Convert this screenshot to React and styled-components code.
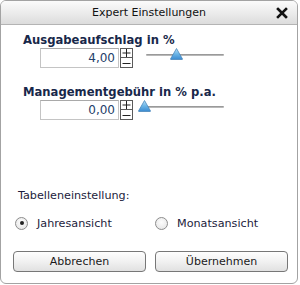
import React from "react";
import styled, { createGlobalStyle } from "styled-components";

const Global = createGlobalStyle`
  html, body { margin: 0; padding: 0; background: #fff; }
  body { font-family: "DejaVu Sans", Verdana, sans-serif; }
`;

const Dialog = styled.div`
  box-sizing: border-box;
  width: 298px;
  height: 284px;
  border: 1px solid #a3a3a3;
  border-radius: 6px;
  overflow: hidden;
  display: flex;
  flex-direction: column;
  background: #fff;
`;

const TitleBar = styled.div`
  box-sizing: border-box;
  height: 24px;
  flex: none;
  display: flex;
  align-items: center;
  justify-content: center;
  position: relative;
  background: linear-gradient(#fbfbfb, #e9e9e9 60%, #dcdcdc);
  border-bottom: 1px solid #b4b4b4;
  font-size: 11px;
  color: #111;
`;

const Close = styled.button`
  position: absolute;
  right: 9px;
  top: 6px;
  width: 12px;
  height: 12px;
  padding: 0;
  border: 0;
  background: none;
  display: flex;
`;

const Body = styled.div`
  flex: 1;
  display: flex;
  flex-direction: column;
  padding: 7px 0 0 0;
`;

const FieldLabel = styled.div`
  font-size: 11.6px;
  font-weight: bold;
  line-height: 16px;
  color: #18284a;
  padding-left: 22px;
  margin-top: ${(p) => p.$top || 0}px;
  white-space: nowrap;
`;

const InputRow = styled.div`
  display: flex;
  align-items: center;
  padding-left: 39px;
  height: 20px;
`;

const NumberBox = styled.div`
  box-sizing: border-box;
  width: 79px;
  height: 20px;
  border: 1px solid #c4c4c4;
  border-top-color: #a9a9a9;
  font-size: 12px;
  color: #24406a;
  display: flex;
  align-items: center;
  justify-content: flex-end;
  padding-right: 3px;
`;

const Spinner = styled.div`
  display: flex;
  flex-direction: column;
  margin-left: 1px;
`;

const SpinBtn = styled.div`
  box-sizing: border-box;
  width: 13px;
  height: 10px;
  border: 1px solid #5a5a5a;
  background: #fff;
  display: flex;
  align-items: center;
  justify-content: center;
  & + & { margin-top: -1px; height: 11px; }
`;

const Slider = styled.div`
  position: relative;
  width: 78px;
  height: 20px;
  margin-left: ${(p) => p.$gap}px;
`;

const Track = styled.div`
  position: absolute;
  left: 0;
  right: 0;
  top: ${(p) => p.$y}px;
  height: 2px;
  border-radius: 1px;
  background: linear-gradient(#8a8a8a, #c8c8c8);
`;

const Thumb = styled.svg`
  position: absolute;
  top: ${(p) => p.$y}px;
  width: 13px;
  height: 12px;
`;

const SectionLabel = styled.div`
  font-size: 11.2px;
  line-height: 15px;
  color: #1c1c3c;
  padding-left: 17px;
  margin-top: ${(p) => p.$top}px;
`;

const RadioRow = styled.div`
  display: flex;
  align-items: center;
  height: 16px;
  margin-top: 12px;
  padding-left: 14px;
`;

const RadioItem = styled.label`
  display: flex;
  align-items: center;
  gap: 9px;
  font-size: 11.2px;
  color: #1c1c3c;
  width: ${(p) => p.$w}px;
`;

const RadioCircle = styled.span`
  box-sizing: border-box;
  width: 13px;
  height: 13px;
  border-radius: 50%;
  border: 1px solid #8c8c8c;
  background: radial-gradient(circle at 50% 40%, #fdfdfd, #e2e2e2);
  display: flex;
  align-items: center;
  justify-content: center;
  &::after {
    content: "";
    width: 4px;
    height: 4px;
    border-radius: 50%;
    background: #222;
    display: ${(p) => (p.$checked ? "block" : "none")};
  }
`;

const ButtonRow = styled.div`
  display: flex;
  gap: 9px;
  padding-left: 12px;
  margin-top: 20px;
`;

const Button = styled.button`
  box-sizing: border-box;
  width: 133px;
  height: 21px;
  border: 1px solid #777;
  border-radius: 4px;
  background: linear-gradient(#fefefe, #f1f1f1 50%, #e1e1e1);
  font-family: "DejaVu Sans", Verdana, sans-serif;
  font-size: 11px;
  color: #1a1a1a;
  padding: 0;
`;

const ThumbIcon = ({ x, y }) => (
  <Thumb $y={y} style={{ left: x - 6.5 }} viewBox="0 0 13 12">
    <defs>
      <linearGradient id="tg" x1="0" y1="0" x2="0" y2="1">
        <stop offset="0" stopColor="#b9e0f7" />
        <stop offset="0.5" stopColor="#6ab4e6" />
        <stop offset="1" stopColor="#3a8ad0" />
      </linearGradient>
    </defs>
    <path d="M6.5 0.5 L12.5 11 Q12.5 11.5 12 11.5 L1 11.5 Q0.5 11.5 0.5 11 Z" fill="url(#tg)" stroke="#4a88bb" strokeWidth="0.8" />
  </Thumb>
);

const Plus = () => (
  <svg width="9" height="8" viewBox="0 0 9 8">
    <path d="M0.5 4H8.5M4.5 0V8" stroke="#222" strokeWidth="1" />
  </svg>
);
const Minus = () => (
  <svg width="9" height="8" viewBox="0 0 9 8">
    <path d="M0.5 4.5H8.5" stroke="#222" strokeWidth="1" />
  </svg>
);

const Field = ({ label, value, thumb, top }) => (
  <>
    <FieldLabel $top={top}>{label}</FieldLabel>
    <InputRow>
      <NumberBox>{value}</NumberBox>
      <Spinner>
        <SpinBtn><Plus /></SpinBtn>
        <SpinBtn><Minus /></SpinBtn>
      </Spinner>
      <Slider $gap={13}>
        <Track $y={6} />
        <ThumbIcon x={thumb} y={0} />
      </Slider>
    </InputRow>
  </>
);

export default function App() {
  return (
    <>
      <Global />
      <Dialog>
        <TitleBar>
          Expert Einstellungen
          <Close aria-label="close">
            <svg width="12" height="12" viewBox="0 0 12 12">
              <path d="M2 2L10 10M10 2L2 10" stroke="#111" strokeWidth="2.6" strokeLinecap="square" />
            </svg>
          </Close>
        </TitleBar>
        <Body>
          <Field label="Ausgabeaufschlag in %" value="4,00" thumb={30} top={0} />
          <Field label="Managementgebühr in % p.a." value="0,00" thumb={-2} top={16} />
          <SectionLabel $top={68}>Tabelleneinstellung:</SectionLabel>
          <RadioRow>
            <RadioItem $w={140}>
              <RadioCircle $checked />
              Jahresansicht
            </RadioItem>
            <RadioItem $w={140}>
              <RadioCircle />
              Monatsansicht
            </RadioItem>
          </RadioRow>
          <ButtonRow>
            <Button>Abbrechen</Button>
            <Button>Übernehmen</Button>
          </ButtonRow>
        </Body>
      </Dialog>
    </>
  );
}
